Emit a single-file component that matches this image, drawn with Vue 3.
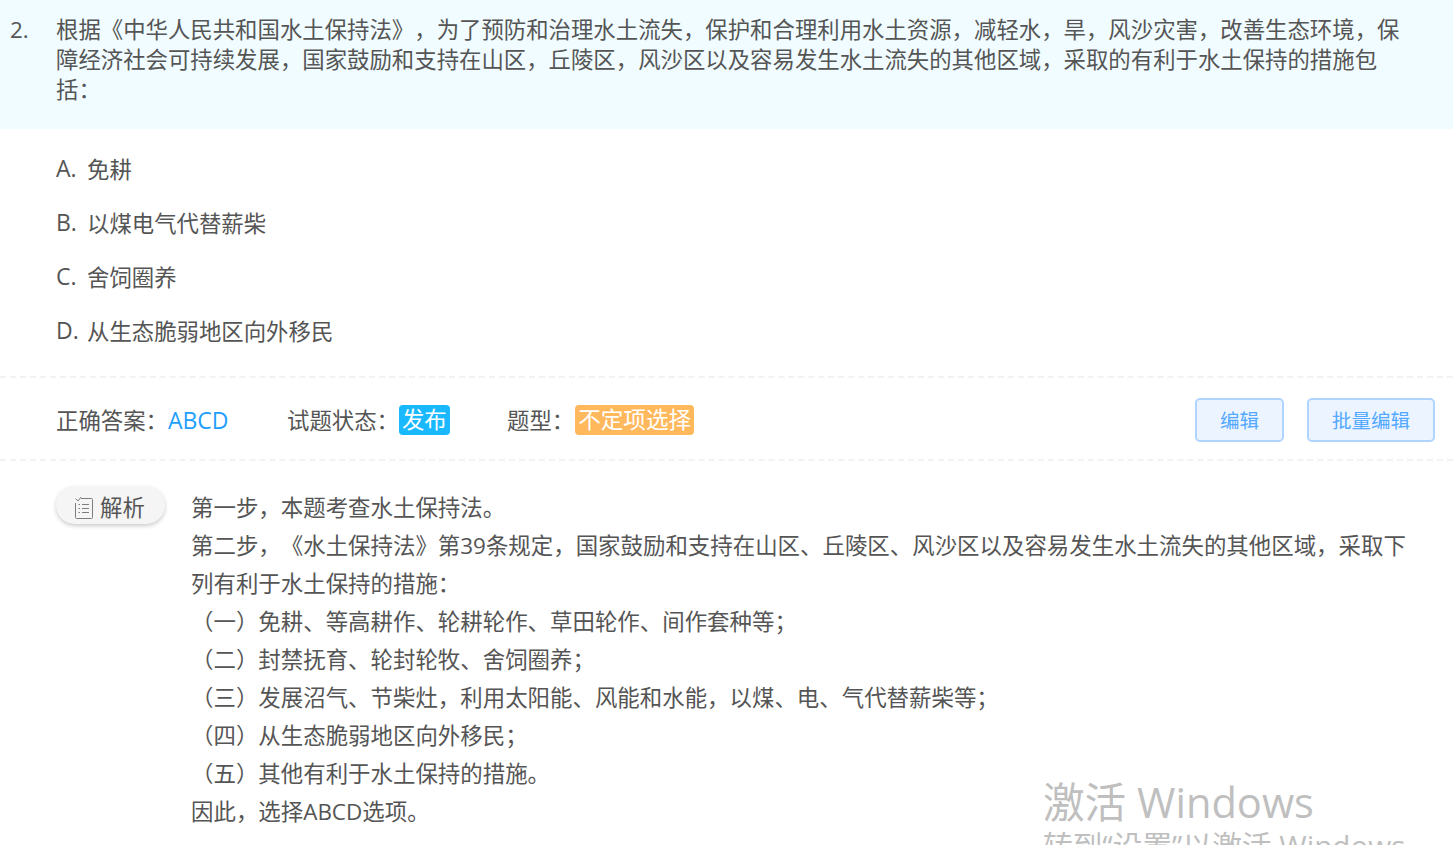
<script setup>
const options = [
  { key: 'A', text: '免耕' },
  { key: 'B', text: '以煤电气代替薪柴' },
  { key: 'C', text: '舍饲圈养' },
  { key: 'D', text: '从生态脆弱地区向外移民' }
]
const analysis = [
  '第一步，本题考查水土保持法。',
  '第二步，《水土保持法》第39条规定，国家鼓励和支持在山区、丘陵区、风沙区以及容易发生水土流失的其他区域，采取下列有利于水土保持的措施：',
  '（一）免耕、等高耕作、轮耕轮作、草田轮作、间作套种等；',
  '（二）封禁抚育、轮封轮牧、舍饲圈养；',
  '（三）发展沼气、节柴灶，利用太阳能、风能和水能，以煤、电、气代替薪柴等；',
  '（四）从生态脆弱地区向外移民；',
  '（五）其他有利于水土保持的措施。',
  '因此，选择ABCD选项。'
]
</script>

<template>
  <div class="page">
    <header class="question">
      <span class="num">2.</span>
      <p class="stem">根据《中华人民共和国水土保持法》，为了预防和治理水土流失，保护和合理利用水土资源，减轻水，旱，风沙灾害，改善生态环境，保障经济社会可持续发展，国家鼓励和支持在山区，丘陵区，风沙区以及容易发生水土流失的其他区域，采取的有利于水土保持的措施包括：</p>
    </header>

    <ul class="options">
      <li v-for="o in options" :key="o.key" class="option">
        <span class="opt-key">{{ o.key }}.</span>
        <span>{{ o.text }}</span>
      </li>
    </ul>

    <section class="meta">
      <div class="meta-item answer-item">正确答案：<span class="answer">ABCD</span></div>
      <div class="meta-item status-item">试题状态：<span class="tag tag-blue">发布</span></div>
      <div class="meta-item">题型：<span class="tag tag-orange">不定项选择</span></div>
      <div class="actions">
        <button class="btn btn-edit">编辑</button>
        <button class="btn btn-batch">批量编辑</button>
      </div>
    </section>

    <section class="analysis">
      <div class="pill">
        <svg class="pill-icon" width="20" height="24" viewBox="0 0 20 24" fill="none" stroke="#7d7d7d" stroke-width="1">
          <path d="M7 2.5H17.5a1 1 0 0 1 1 1V21.5a1 1 0 0 1-1 1H2.5a1 1 0 0 1-1-1V7" />
          <path d="M1.5 2.5L4 5L7 1" />
          <path d="M8 8.5H15M8 12.5H15M8 16.5H15" />
          <path d="M4.5 8.5H6M4.5 12.5H6M4.5 16.5H6" />
        </svg>
        <span>解析</span>
      </div>
      <div class="analysis-body">
        <p v-for="(line, i) in analysis" :key="i" class="analysis-line">{{ line }}</p>
      </div>
    </section>

    <div class="watermark">
      <div class="wm-title">激活 Windows</div>
      <div class="wm-sub">转到“设置”以激活 Windows。</div>
    </div>
  </div>
</template>

<style>
html, body { margin: 0; background: #fff; overflow: hidden; }
</style>

<style scoped>
.page {
  position: relative;
  width: 1453px;
  height: 845px;
  overflow: hidden;
  background: #fff;
  color: #555;
  font-family: "Open Sans", "Noto Sans CJK SC", sans-serif;
  font-size: 22.4px;
  text-spacing-trim: space-all;
}
.question {
  display: flex;
  background: #f0fcff;
  padding: 15px 40px 24px 10px;
  height: 90px;
}
.num { width: 46px; flex: none; line-height: 30px; }
.stem { margin: 0; line-height: 30px; flex: 1; }
.options {
  list-style: none;
  margin: 0;
  padding: 12px 0 19px 56px;
}
.option {
  display: flex;
  align-items: center;
  height: 54px;
}
.opt-key { width: 31px; flex: none; font-size: 23px; }
.meta {
  display: flex;
  align-items: center;
  height: 79px;
  padding: 2px 18px 0 56px;
  border-top: 2px dashed #f2f2f2;
  border-bottom: 2px dashed #f2f2f2;
}
.meta-item { display: flex; align-items: center; }
.answer-item { width: 231px; }
.status-item { width: 220px; }
.answer { color: #1e9fff; font-size: 23px; }
.tag {
  color: #fff;
  border-radius: 4px;
  height: 30px;
  line-height: 30px;
  padding: 0 3px;
}
.tag-blue { background: #1ab9ff; }
.tag-orange { background: #ffb85c; font-size: 22.6px; margin-left: 1px; }
.actions { margin-left: auto; display: flex; gap: 23px; }
.btn {
  height: 44px;
  box-sizing: border-box;
  border: 2px solid #aed4ff;
  border-radius: 5px;
  background: #ecf5ff;
  color: #53a8ff;
  font: inherit;
  font-size: 19.5px;
  padding: 0;
}
.btn-edit { width: 89px; }
.btn-batch { width: 128px; }
.analysis {
  display: flex;
  align-items: flex-start;
  padding: 25px 40px 0 56px;
}
.pill {
  flex: none;
  box-sizing: border-box;
  width: 109px;
  height: 38px;
  margin-right: 26px;
  border-radius: 19px;
  background: #f5f5f5;
  box-shadow: 0 2px 4px rgba(0, 0, 0, 0.2);
  display: flex;
  align-items: center;
  padding: 2px 0 0 18px;
  gap: 6px;
}
.pill-icon { flex: none; margin-top: 4px; }
.analysis-body { flex: 1; min-width: 0; margin-top: 3px; font-size: 22.44px; }
.analysis-line { margin: 0; line-height: 38px; }
.watermark {
  position: absolute;
  left: 1043px;
  top: 773px;
  color: #bfbfbf;
  white-space: nowrap;
}
.wm-title { font-size: 41.6px; line-height: 58px; }
.wm-sub { font-size: 29.7px; line-height: 30px; }
</style>
